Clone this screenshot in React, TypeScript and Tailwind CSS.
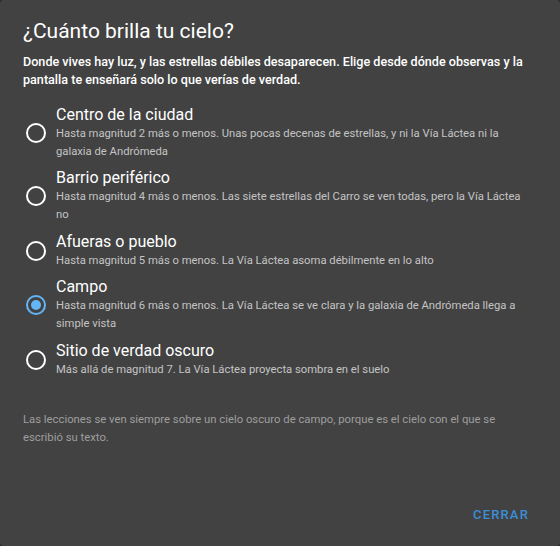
import { useState } from "react";

const options = [
  {
    id: "city",
    label: "Centro de la ciudad",
    desc: "Hasta magnitud 2 más o menos. Unas pocas decenas de estrellas, y ni la Vía Láctea ni la galaxia de Andrómeda",
  },
  {
    id: "suburb",
    label: "Barrio periférico",
    desc: "Hasta magnitud 4 más o menos. Las siete estrellas del Carro se ven todas, pero la Vía Láctea no",
  },
  {
    id: "town",
    label: "Afueras o pueblo",
    desc: "Hasta magnitud 5 más o menos. La Vía Láctea asoma débilmente en lo alto",
  },
  {
    id: "rural",
    label: "Campo",
    desc: "Hasta magnitud 6 más o menos. La Vía Láctea se ve clara y la galaxia de Andrómeda llega a simple vista",
  },
  {
    id: "dark",
    label: "Sitio de verdad oscuro",
    desc: "Más allá de magnitud 7. La Vía Láctea proyecta sombra en el suelo",
  },
];

const Radio = ({ checked }: { checked: boolean }) => (
  <span
    className={`flex h-5 w-5 shrink-0 items-center justify-center rounded-full border-2 ${
      checked ? "border-[#64b5f6]" : "border-white"
    }`}
  >
    {checked && <span className="h-[10px] w-[10px] rounded-full bg-[#64b5f6]" />}
  </span>
);

export default function App() {
  const [selected, setSelected] = useState("rural");

  return (
    <div
      className="h-[546px] w-[560px] bg-[#2b2b2b]"
      style={{ fontFamily: "Roboto, 'Liberation Sans', sans-serif" }}
    >
      <div className="flex h-full flex-col rounded-[4px] bg-[#424242] px-[23px] pt-[15px] pb-[22px]">
        {/* Title */}
        <h2 className="text-[21px] leading-[32px] text-white">¿Cuánto brilla tu cielo?</h2>

        {/* Intro */}
        <p className="mt-[6px] text-[12.6px] font-medium leading-[18px] text-white">
          Donde vives hay luz, y las estrellas débiles desaparecen. Elige desde dónde observas y la
          pantalla te enseñará solo lo que verías de verdad.
        </p>

        {/* Options */}
        <div className="mt-[15.5px] flex flex-col gap-[7.5px] pr-[10px]">
          {options.map((opt) => (
            <button
              key={opt.id}
              onClick={() => setSelected(opt.id)}
              className="flex items-center gap-[10px] pl-[3px] text-left"
            >
              <Radio checked={selected === opt.id} />
              <div className="flex flex-col">
                <span className="text-[16px] leading-[20px] text-white">{opt.label}</span>
                <span className="text-[11.25px] leading-[18px] text-[#c4c4c4]">{opt.desc}</span>
              </div>
            </button>
          ))}
        </div>

        {/* Note */}
        <p className="mt-[32px] text-[11.3px] leading-[18px] text-[#9e9e9e]">
          Las lecciones se ven siempre sobre un cielo oscuro de campo, porque es el cielo con el que se
          escribió su texto.
        </p>

        <div className="mt-auto flex justify-end">
          <button className="px-2 text-[13px] font-medium tracking-[0.09em] text-[#3a8fd8]">
            CERRAR
          </button>
        </div>
      </div>
    </div>
  );
}
